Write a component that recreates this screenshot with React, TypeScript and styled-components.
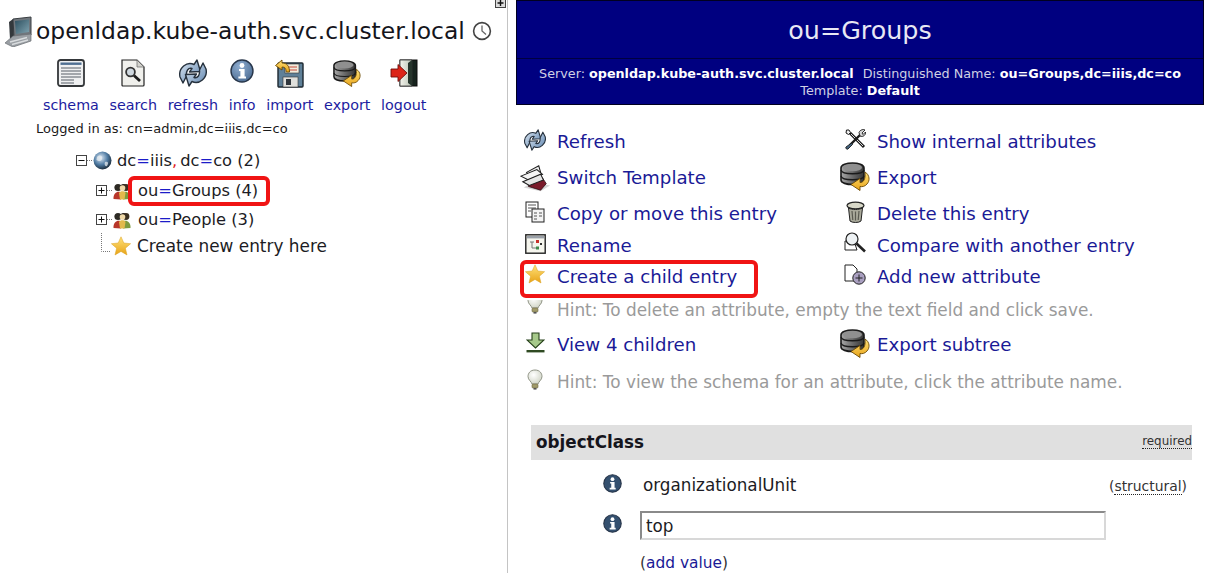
import styled, { createGlobalStyle } from 'styled-components'
import { ReactNode } from 'react'

const GlobalStyle = createGlobalStyle`
  html, body {
    margin: 0;
    padding: 0;
    background: #ffffff;
    font-family: "DejaVu Sans", sans-serif;
    overflow: hidden;
  }
`

// shared gradients for the old phpLDAPadmin style icons
const IconDefs = () => (
  <svg width="0" height="0" style={{ position: 'absolute' }}>
    <defs>
      <linearGradient id="gDisk" x1="0" y1="0" x2="1" y2="0">
        <stop offset="0" stopColor="#a8a8a8" />
        <stop offset="0.5" stopColor="#6a6a6a" />
        <stop offset="1" stopColor="#353535" />
      </linearGradient>
      <linearGradient id="gBlue" x1="0" y1="0" x2="1" y2="1">
        <stop offset="0" stopColor="#dfe9f3" />
        <stop offset="1" stopColor="#5b82ad" />
      </linearGradient>
      <linearGradient id="gGold" x1="0" y1="0" x2="0" y2="1">
        <stop offset="0" stopColor="#ffe27a" />
        <stop offset="1" stopColor="#e8a317" />
      </linearGradient>
      <linearGradient id="gScreen" x1="0" y1="0" x2="1" y2="1">
        <stop offset="0" stopColor="#2d4f5f" />
        <stop offset="1" stopColor="#7fa3b0" />
      </linearGradient>
      <linearGradient id="gDoor" x1="0" y1="0" x2="1" y2="0">
        <stop offset="0" stopColor="#f4f4ec" />
        <stop offset="1" stopColor="#b9c2b4" />
      </linearGradient>
      <radialGradient id="gGlobe" cx="0.4" cy="0.35" r="0.7">
        <stop offset="0" stopColor="#dfeaf5" />
        <stop offset="0.55" stopColor="#4f7ba3" />
        <stop offset="1" stopColor="#14222f" />
      </radialGradient>
      <radialGradient id="gInfo" cx="0.4" cy="0.3" r="0.8">
        <stop offset="0" stopColor="#8fadd0" />
        <stop offset="1" stopColor="#47688f" />
      </radialGradient>
      <radialGradient id="gBulb" cx="0.4" cy="0.35" r="0.7">
        <stop offset="0" stopColor="#ffffff" />
        <stop offset="1" stopColor="#cfd3c4" />
      </radialGradient>
    </defs>
  </svg>
)

const ServerIcon = () => (
  <svg width="28" height="31" viewBox="0 0 28 31">
    <path d="M9 3 L27 1 L27 19 L10 21 Z" fill="#70767c" stroke="#3b3f43" />
    <path d="M11 5 L25 3.5 L25 16 L12 18 Z" fill="url(#gScreen)" />
    <path d="M9 3 L5 6 L6 23 L10 21 Z" fill="#33383c" />
    <path d="M1 27 L9 20 L27 18 L27 25 L9 31 Z" fill="#9a9fa4" stroke="#6a6e72" strokeWidth="0.7" />
    <path d="M6 26 L23 21.5 M8 28.5 L24 24" stroke="#d9dcde" strokeWidth="1.4" />
  </svg>
)

const ClockIcon = () => (
  <svg width="20" height="20" viewBox="0 0 20 20">
    <circle cx="10" cy="10" r="8.4" fill="#fff" stroke="#444" strokeWidth="1.6" />
    <path d="M10 4.5 V10 L14 13.5" fill="none" stroke="#666" strokeWidth="1.3" />
  </svg>
)

const FrameToggleIcon = () => (
  <svg width="11" height="8" viewBox="0 0 11 8">
    <rect x="0.5" y="-2" width="10" height="9.5" fill="#dcdcdc" stroke="#444" />
    <path d="M5.5 0 V6 M2.5 3 H8.5" stroke="#111" strokeWidth="1.4" />
  </svg>
)

const SchemaIcon = () => (
  <svg width="28" height="28" viewBox="0 0 28 28">
    <rect x="1" y="1" width="26" height="26" rx="2.5" fill="#eff0f1" stroke="#34373a" strokeWidth="1.8" />
    <rect x="3.5" y="3.5" width="21" height="2.4" fill="#4f6f92" />
    <path d="M4 9 H24 M4 12 H24 M4 15 H24 M4 18 H24 M4 21 H17 M4 24 H17" stroke="#8b8f95" strokeWidth="1.5" />
  </svg>
)

const SearchIcon = () => (
  <svg width="24" height="28" viewBox="0 0 24 28">
    <path d="M1 1 H16 L23 8 V26 Q23 27 22 27 H2 Q1 27 1 26 Z" fill="#f0f0ec" stroke="#222" strokeWidth="1.2" />
    <path d="M16 1 V8 H23 Z" fill="#d2d2cc" stroke="#666" strokeWidth="0.7" />
    <circle cx="9.5" cy="13" r="4.4" fill="#cfd8df" stroke="#333" strokeWidth="1.8" />
    <path d="M13 16.5 L19 22" stroke="#1b1b1b" strokeWidth="2.8" />
  </svg>
)

const RefreshIcon = ({ size = 28 }: { size?: number }) => (
  <svg width={size} height={size} viewBox="0 0 28 28">
    <path d="M1 18 C-1 9 8 2 15 5.5 L18 1 L21.5 12.5 L10.5 13 L13 9.5 C9 8.5 7 12 7.5 17 L4 24 Z" fill="url(#gBlue)" stroke="#26313d" strokeWidth="1.4" strokeLinejoin="round" />
    <path d="M27 10 C29 19 20 26 13 22.5 L10 27 L6.5 15.5 L17.5 15 L15 18.5 C19 19.5 21 16 20.5 11 L24 4 Z" fill="url(#gBlue)" stroke="#26313d" strokeWidth="1.4" strokeLinejoin="round" />
  </svg>
)

const InfoIcon = ({ size = 24, dark }: { size?: number; dark?: boolean }) => (
  <svg width={size} height={size} viewBox="0 0 24 24">
    <circle cx="12" cy="12" r="11" fill={dark ? '#34506f' : 'url(#gInfo)'} stroke="#28364a" strokeWidth="1.4" />
    <circle cx="12" cy="6.5" r="2.4" fill="#fff" />
    <path d="M9 10 H14.6 V17.5 H16 V19.6 H8.4 V17.5 H10.4 V12 H9 Z" fill="#fff" />
  </svg>
)

const ImportIcon = () => (
  <svg width="29" height="29" viewBox="0 0 29 29">
    <rect x="3" y="4" width="25" height="24" rx="1" fill="#5f8098" stroke="#1d2730" strokeWidth="1.4" />
    <rect x="10" y="5" width="14" height="9" fill="#f1ecdc" stroke="#333" strokeWidth="0.6" />
    <path d="M13 8 H22 M13 11 H22" stroke="#c84a3a" />
    <rect x="8" y="18" width="15" height="10" fill="#e0e0dc" stroke="#333" strokeWidth="0.6" />
    <rect x="11" y="20" width="5" height="6" fill="#30363c" />
    <path d="M0.5 6.5 L7 1 L7 4 C12 4 14.5 7 14.5 13 L11.2 13 C11 9.5 10 8 7 8 L7 11 Z" fill="url(#gGold)" stroke="#6b4a05" strokeWidth="0.9" />
  </svg>
)

const DatabaseIcon = ({ size = 28 }: { size?: number }) => (
  <svg width={size} height={size} viewBox="0 0 30 30">
    <path d="M1 7 C1 0.5 24 0.5 24 7 V19 C24 25 1 25 1 19 Z" fill="url(#gDisk)" stroke="#1a1a1a" strokeWidth="1.6" />
    <path d="M1 9 C2 14 23 14 24 9" fill="none" stroke="#1a1a1a" strokeWidth="1.3" />
    <path d="M1 15 C2 20 23 20 24 15" fill="none" stroke="#1a1a1a" strokeWidth="1.3" />
    <ellipse cx="12.5" cy="6.5" rx="9.5" ry="3.8" fill="#8f8f8f" />
    <path d="M25 11 C30 14 30 20 27 23 C25 25.5 22 26 20 25.5 L20 29.5 L11 23.5 L20 17.5 L20 21.5 C23 22 26 18 25 11 Z" fill="url(#gGold)" stroke="#6b4a05" strokeWidth="0.9" />
  </svg>
)

const LogoutIcon = () => (
  <svg width="28" height="28" viewBox="0 0 28 28">
    <rect x="10" y="1" width="17" height="26" fill="#16231d" stroke="#0c0c0c" />
    <path d="M10 1 H22 V27 H10 Z" fill="url(#gDoor)" stroke="#333" strokeWidth="0.8" />
    <path d="M22 1 L18 4 V24 L22 27 Z" fill="#26352c" />
    <path d="M1 10 H8 V5.5 L17 14 L8 22.5 V18 H1 Z" fill="#dc2418" stroke="#6f0f0a" strokeWidth="0.9" />
  </svg>
)

const GlobeIcon = () => (
  <svg width="19" height="19" viewBox="0 0 19 19">
    <circle cx="9.5" cy="9.5" r="9" fill="url(#gGlobe)" />
    <path d="M4 6 C7 3 10 5 9 8 C8 11 5 10 3.5 9 Z M12 11 C15 10 16 12 14 15 C12 16 11 13 12 11 Z" fill="#e8eef2" opacity="0.75" />
  </svg>
)

const PeopleIcon = () => (
  <svg width="18" height="19" viewBox="0 0 18 19">
    <path d="M6 9 C6 1 15 1 15 9 Z" fill="#2b2620" />
    <circle cx="5" cy="6.5" r="3.6" fill="#2d2a24" />
    <circle cx="13" cy="6.5" r="3.4" fill="#3a2f20" />
    <circle cx="9.5" cy="7" r="2.8" fill="#f0d9a8" />
    <path d="M0.5 18 C0 10 7 9.5 8 12 V18.5 Z" fill="#b8362a" />
    <path d="M10 12 C11 9.5 18 10 17.5 18 L10 18.5 Z" fill="#7d9a3e" />
    <path d="M6 12 C7 9.5 12 9.5 12.5 12 L11.5 18.5 H7 Z" fill="#e2b94c" />
  </svg>
)

const StarIcon = ({ size = 20 }: { size?: number }) => (
  <svg width={size} height={size} viewBox="0 0 20 20">
    <path d="M10 0.8 L12.8 7 L19.6 7.7 L14.4 12.2 L16 19 L10 15.4 L4 19 L5.6 12.2 L0.4 7.7 L7.2 7 Z" fill="url(#gGold)" stroke="#dba01e" strokeWidth="0.5" />
  </svg>
)

const TemplateIcon = () => (
  <svg width="32" height="28" viewBox="0 0 32 28">
    <path d="M4 24 L22 28 L32 22 L14 18 Z" fill="#b9b9b9" opacity="0.6" />
    <path d="M9 17 L24 14 L28 20 L22 27 L9 23 Z" fill="#7a1a2a" stroke="#2a0a10" strokeWidth="0.8" />
    <path d="M7 8 L20 1 L22 8 L10 12 Z" fill="#eeeeee" stroke="#1c1c1c" strokeWidth="1.1" />
    <path d="M1 12 L18 5 L24 10 L9 16 Z" fill="#f5f5f5" stroke="#1c1c1c" strokeWidth="1.1" />
    <path d="M3 18 L22 10 L25 16 L10 22 Z" fill="#e6e6e6" stroke="#1c1c1c" strokeWidth="1.1" />
  </svg>
)

const CopyIcon = () => (
  <svg width="20" height="22" viewBox="0 0 20 22">
    <rect x="1" y="1" width="12" height="15" fill="#fff" stroke="#222" />
    <path d="M3 4 H11 M3 7 H11 M3 10 H6" stroke="#555" />
    <rect x="7" y="8" width="12" height="13" fill="#f4f4f4" stroke="#222" />
    <path d="M9 12 H12 M14 12 H17 M9 15 H12 M14 15 H17 M9 18 H12" stroke="#555" />
  </svg>
)

const RenameIcon = () => (
  <svg width="21" height="20" viewBox="0 0 21 20">
    <rect x="0.8" y="0.8" width="19.4" height="18.4" fill="#f6f6ee" stroke="#222" strokeWidth="1.4" />
    <rect x="2" y="2" width="17" height="2.4" fill="#9aa0a8" />
    <path d="M5 8 H9 M7 8 V14 H11" fill="none" stroke="#777" />
    <rect x="11" y="6" width="3" height="3" fill="#c8302a" />
    <rect x="11" y="12.5" width="3" height="3" fill="#3f8a4a" />
    <rect x="15" y="9" width="2" height="2" fill="#333" />
  </svg>
)

const BulbIcon = ({ height = 21 }: { height?: number }) => (
  <svg width="16" height={height} viewBox={`0 ${21 - height} 16 ${height}`}>
    <path d="M8 1 C3 1 1 4.5 1 7.5 C1 11 4.5 12.5 5 15 H11 C11.5 12.5 15 11 15 7.5 C15 4.5 13 1 8 1 Z" fill="url(#gBulb)" stroke="#8f9385" />
    <rect x="5" y="15" width="6" height="4" rx="1" fill="#a09a6a" stroke="#6f6a45" strokeWidth="0.6" />
    <rect x="6.5" y="19" width="3" height="1.6" fill="#555" />
  </svg>
)

const ToolsIcon = () => (
  <svg width="21" height="21" viewBox="0 0 21 21">
    <path d="M5 4 L19 18" stroke="#1c1c1c" strokeWidth="3" />
    <path d="M6 5 L18 17" stroke="#d8d8d8" strokeWidth="1" />
    <path d="M1.5 1 L4 1 L5.5 3.5 L3.5 5.5 L1 4 Z" fill="#eee" stroke="#1c1c1c" />
    <path d="M15 6 L5 16" stroke="#1c1c1c" strokeWidth="2.4" />
    <path d="M14 3.5 C15 0.5 19 0 20 1 L17 4 L18 5.5 L20.5 3 C21 6 18 8.5 15 7 Z" fill="#d8d8d8" stroke="#1c1c1c" strokeWidth="0.9" />
    <path d="M6.5 14 L1 18 C0 19 2 21 3 20 L7.5 15.5 Z" fill="#44637f" stroke="#1c1c1c" strokeWidth="0.9" />
  </svg>
)

const TrashIcon = () => (
  <svg width="19" height="22" viewBox="0 0 19 22">
    <ellipse cx="9.5" cy="4.5" rx="8.5" ry="3.4" fill="#d8d8c8" stroke="#222" strokeWidth="1.2" />
    <path d="M2.5 7 L4 20 C6 22 13 22 15 20 L16.5 7 C13 9 6 9 2.5 7 Z" fill="#a9a99a" stroke="#222" />
    <path d="M6 10 L6.8 19 M9.5 10.5 V19.6 M13 10 L12.2 19" stroke="#5a5a50" strokeWidth="1.2" />
  </svg>
)

const CompareIcon = () => (
  <svg width="22" height="21" viewBox="0 0 22 21">
    <path d="M1 9 V18 H13 L10 9 Z" fill="#fff" stroke="#222" />
    <circle cx="8" cy="7" r="6" fill="#eef2f4" stroke="#222" strokeWidth="1.2" />
    <path d="M12.5 11.5 L21 19.5" stroke="#222" strokeWidth="2.6" />
  </svg>
)

const AddAttrIcon = () => (
  <svg width="22" height="21" viewBox="0 0 22 21">
    <path d="M1 1 H9 L13 5 V17 H1 Z" fill="#fff" stroke="#222" />
    <circle cx="15" cy="14" r="6.2" fill="#a99fc0" stroke="#222" />
    <path d="M15 10.5 V17.5 M11.5 14 H18.5" stroke="#222" />
  </svg>
)

const DownloadIcon = () => (
  <svg width="19" height="21" viewBox="0 0 19 21">
    <path d="M6 1 H13 V8 H18 L9.5 16 L1 8 H6 Z" fill="#a6c98a" stroke="#26401a" strokeWidth="1.1" />
    <rect x="0.5" y="18" width="18" height="2.4" fill="#2f4a22" />
  </svg>
)

const Expander = ({ open }: { open?: boolean }) => (
  <svg width="16" height="11" viewBox="0 0 16 11">
    <rect x="0.5" y="0.5" width="10" height="10" fill="#fff" stroke="#444" />
    <path d={open ? 'M2.5 5.5 H8.5' : 'M2.5 5.5 H8.5 M5.5 2.5 V8.5'} stroke="#111" />
    <path d="M11 5.5 H16" stroke="#777" strokeDasharray="1 1" />
  </svg>
)

const ExpanderWithLine = styled.span`
  display: flex;
  flex: 0 0 17px;
`

const CornerLine = () => (
  <svg width="11" height="26" viewBox="0 0 11 26">
    <path d="M1.5 0 V18.5 H11" fill="none" stroke="#777" strokeDasharray="1 1" />
  </svg>
)

const Page = styled.div`
  display: grid;
  grid-template-columns: 508px 1fr;
  height: 573px;
  overflow: hidden;
`

const LeftPane = styled.div`
  position: relative;
  border-right: 1px solid #c4c4c4;
  padding-top: 16px;
`

const FrameToggle = styled.span`
  position: absolute;
  top: 0;
  right: 1px;
  display: flex;
`

const ServerTitle = styled.div`
  display: flex;
  align-items: center;
  gap: 4px;
  padding-left: 4px;
  height: 30px;
  font-size: 23.45px;
  color: #15151c;
  white-space: nowrap;
  svg:last-child {
    margin-left: 3px;
  }
`

const Toolbar = styled.div`
  display: flex;
  gap: 10.7px;
  margin-top: 13px;
  padding-left: 43px;
`

const ToolItem = styled.a`
  display: flex;
  flex-direction: column;
  align-items: center;
  justify-content: space-between;
  height: 54px;
  font-size: 14.3px;
  color: #1c1ca0;
`

const LoggedIn = styled.div`
  margin-top: 8px;
  padding-left: 36px;
  font-size: 13px;
  color: #1a1a1a;
`

const Tree = styled.div`
  margin-top: 12px;
  font-size: 16.3px;
  color: #1c1c24;
`

const TreeRow = styled.div<{ $indent: number; $height: number }>`
  display: flex;
  align-items: center;
  height: ${p => p.$height}px;
  padding-left: ${p => p.$indent}px;
  white-space: nowrap;
`

const TreeLabel = styled.span<{ $gap: number; $size?: number }>`
  margin-left: ${p => p.$gap}px;
  font-size: ${p => (p.$size ? `${p.$size}px` : 'inherit')};
`

const Eq = styled.span`
  color: #1c1cc8;
`

const Comma = styled.span`
  color: #e02020;
  margin-right: 3px;
`

// red annotation frame drawn over the screenshot
const Marked = styled.span`
  position: relative;
  &::after {
    content: '';
    position: absolute;
    top: -5px;
    bottom: -6px;
    left: -10px;
    right: -12px;
    border: 4px solid #f01414;
    border-radius: 6px;
    pointer-events: none;
  }
`

const RightPane = styled.div`
  padding-left: 8px;
  padding-right: 12px;
`

const Banner = styled.div`
  background: #000080;
  border: 1px solid #000020;
  color: #fff;
  height: 105px;
  box-sizing: border-box;
  display: flex;
  flex-direction: column;
`

const BannerTitle = styled.div`
  height: 57px;
  flex-shrink: 0;
  border-bottom: 1px solid #000040;
  display: flex;
  align-items: center;
  justify-content: center;
  font-size: 25.4px;
  color: #e8e8f4;
`

const BannerMeta = styled.div`
  padding-top: 6px;
  font-size: 12.75px;
  line-height: 17px;
  text-align: center;
  color: #cfd0e4;
  b {
    color: #fff;
  }
  span {
    margin-left: 9px;
  }
`

const Actions = styled.div`
  display: grid;
  grid-template-columns: 320px 1fr;
  grid-template-rows: 37px 35px 37px 27px 34px 33px 37px 37px;
  margin-top: 18px;
  padding-left: 4px;
`

const Action = styled.a<{ $wide?: boolean; $marked?: boolean }>`
  position: relative;
  display: flex;
  align-items: center;
  font-size: 18.2px;
  color: #1a1a96;
  white-space: nowrap;
  grid-column: ${p => (p.$wide ? '1 / span 2' : 'auto')};
  ${p => p.$marked && `
    &::after {
      content: '';
      position: absolute;
      top: 1px;
      bottom: -5px;
      left: 0;
      right: 82px;
      border: 4px solid #f01414;
      border-radius: 6px;
    }
  `}
`

const ActionIcon = styled.span<{ $lift?: number }>`
  flex: 0 0 30px;
  min-width: 0;
  margin-right: 7px;
  display: flex;
  justify-content: center;
  transform: translateY(${p => -(p.$lift ?? 0)}px);
`

const Hint = styled(Action)`
  color: #9a9a9a;
  font-size: 16.9px;
`

const AttrHeader = styled.div`
  display: flex;
  align-items: center;
  justify-content: space-between;
  height: 35px;
  margin: 25px 0 0 15px;
  padding-left: 5px;
  padding-bottom: 2px;
  box-sizing: border-box;
  width: 661px;
  background: #e0e0e0;
  font-size: 16.8px;
  font-weight: 700;
  color: #15151c;
`

const Abbrev = styled.span`
  font-size: 11.9px;
  font-weight: 400;
  color: #333;
  border-bottom: 1px dotted #222;
`

const AttrBody = styled.div`
  display: grid;
  grid-template-columns: 37px 466px 1fr;
  grid-auto-rows: auto;
  margin-left: 87px;
  width: 584px;
  font-size: 16.8px;
  color: #1c1c24;
  align-items: center;
`

const ValueText = styled.div`
  grid-column: 2;
  height: 51px;
  line-height: 51px;
  padding-left: 3px;
`

const InfoCell = styled.div`
  grid-column: 1;
  display: flex;
  transform: translateY(-2px);
`

const Structural = styled.div`
  grid-column: 3;
  text-align: right;
  font-size: 13.9px;
  color: #333;
  span {
    border-bottom: 1px dotted #222;
  }
`

const ValueInput = styled.input`
  grid-column: 2;
  box-sizing: border-box;
  width: 466px;
  height: 29px;
  padding: 0 4px;
  border: 2px solid;
  border-color: #8a8a8a #d8d8d8 #d8d8d8 #8a8a8a;
  font-family: inherit;
  font-size: 16.8px;
  color: #1c1c24;
  outline: none;
`

const AddValue = styled.div`
  grid-column: 2;
  margin-top: 14px;
  font-size: 15.4px;
  color: #333;
  a {
    color: #1a1a96;
  }
`

const tools: { label: string; icon: ReactNode }[] = [
  { label: 'schema', icon: <SchemaIcon /> },
  { label: 'search', icon: <SearchIcon /> },
  { label: 'refresh', icon: <RefreshIcon /> },
  { label: 'info', icon: <InfoIcon /> },
  { label: 'import', icon: <ImportIcon /> },
  { label: 'export', icon: <DatabaseIcon /> },
  { label: 'logout', icon: <LogoutIcon /> },
]

export default function App() {
  return (
    <>
      <GlobalStyle />
      <IconDefs />
      <Page>
        <LeftPane>
          <FrameToggle><FrameToggleIcon /></FrameToggle>
          <ServerTitle>
            <ServerIcon />
            openldap.kube-auth.svc.cluster.local
            <ClockIcon />
          </ServerTitle>
          <Toolbar>
            {tools.map(t => (
              <ToolItem key={t.label}>
                {t.icon}
                {t.label}
              </ToolItem>
            ))}
          </Toolbar>
          <LoggedIn>Logged in as: cn=admin,dc=iiis,dc=co</LoggedIn>
          <Tree>
            <TreeRow $indent={76} $height={24}>
              <ExpanderWithLine><Expander open /></ExpanderWithLine>
              <GlobeIcon />
              <TreeLabel $gap={5}>
                dc<Eq>=</Eq>iiis<Comma>,</Comma>dc<Eq>=</Eq>co (2)
              </TreeLabel>
            </TreeRow>
            <TreeRow $indent={96} $height={36}>
              <ExpanderWithLine><Expander /></ExpanderWithLine>
              <PeopleIcon />
              <TreeLabel $gap={7}>
                <Marked>
                  ou<Eq>=</Eq>Groups (4)
                </Marked>
              </TreeLabel>
            </TreeRow>
            <TreeRow $indent={96} $height={23}>
              <ExpanderWithLine><Expander /></ExpanderWithLine>
              <PeopleIcon />
              <TreeLabel $gap={7}>
                ou<Eq>=</Eq>People (3)
              </TreeLabel>
            </TreeRow>
            <TreeRow $indent={100} $height={30}>
              <CornerLine />
              <StarIcon />
              <TreeLabel $gap={6} $size={16.9}>Create new entry here</TreeLabel>
            </TreeRow>
          </Tree>
        </LeftPane>
        <RightPane>
          <Banner>
            <BannerTitle>ou=Groups</BannerTitle>
            <BannerMeta>
              Server: <b>openldap.kube-auth.svc.cluster.local</b>
              <span>Distinguished Name: </span>
              <b>ou=Groups,dc=iiis,dc=co</b>
              <br />
              Template: <b>Default</b>
            </BannerMeta>
          </Banner>
          <Actions>
            <Action>
              <ActionIcon $lift={2}><RefreshIcon size={22} /></ActionIcon>
              Refresh
            </Action>
            <Action>
              <ActionIcon $lift={2}><ToolsIcon /></ActionIcon>
              Show internal attributes
            </Action>
            <Action>
              <ActionIcon><TemplateIcon /></ActionIcon>
              Switch Template
            </Action>
            <Action>
              <ActionIcon $lift={2}><DatabaseIcon size={32} /></ActionIcon>
              Export
            </Action>
            <Action>
              <ActionIcon $lift={2}><CopyIcon /></ActionIcon>
              Copy or move this entry
            </Action>
            <Action>
              <ActionIcon $lift={2}><TrashIcon /></ActionIcon>
              Delete this entry
            </Action>
            <Action>
              <ActionIcon $lift={2}><RenameIcon /></ActionIcon>
              Rename
            </Action>
            <Action>
              <ActionIcon $lift={3}><CompareIcon /></ActionIcon>
              Compare with another entry
            </Action>
            <Action $marked>
              <ActionIcon $lift={2}><StarIcon /></ActionIcon>
              Create a child entry
            </Action>
            <Action>
              <ActionIcon $lift={2}><AddAttrIcon /></ActionIcon>
              Add new attribute
            </Action>
            <Hint $wide>
              <ActionIcon $lift={3}><BulbIcon height={14} /></ActionIcon>
              Hint: To delete an attribute, empty the text field and click save.
            </Hint>
            <Action>
              <ActionIcon $lift={2}><DownloadIcon /></ActionIcon>
              View 4 children
            </Action>
            <Action>
              <ActionIcon $lift={2}><DatabaseIcon size={32} /></ActionIcon>
              Export subtree
            </Action>
            <Hint $wide>
              <ActionIcon $lift={2}><BulbIcon /></ActionIcon>
              Hint: To view the schema for an attribute, click the attribute name.
            </Hint>
          </Actions>
          <AttrHeader>
            objectClass
            <Abbrev>required</Abbrev>
          </AttrHeader>
          <AttrBody>
            <InfoCell><InfoIcon size={19} dark /></InfoCell>
            <ValueText>organizationalUnit</ValueText>
            <Structural>
              (<span>structural</span>)
            </Structural>
            <InfoCell><InfoIcon size={19} dark /></InfoCell>
            <ValueInput defaultValue="top" />
            <AddValue>
              (<a>add value</a>)
            </AddValue>
          </AttrBody>
        </RightPane>
      </Page>
    </>
  )
}
